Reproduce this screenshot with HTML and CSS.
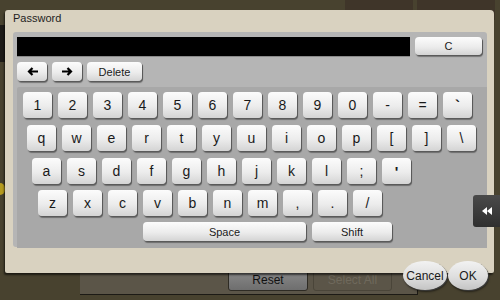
FILE: index.html
```html
<!DOCTYPE html>
<html lang="en">
<head>
  <meta charset="UTF-8" />
  <title>Password</title>
  <link rel="stylesheet" href="styles.css">
</head>
<body>
<div class="screen">
  <!-- background screen, mostly hidden by the dialog -->
  <div class="topbar">
    <div class="tab">Language</div>
    <div class="tab tab-job">Job List</div>
  </div>
  <div class="middle">
    <div class="left-edge">
      <div class="edge-black"></div>
      <div class="edge-bump"></div>
    </div>
  </div>
  <div class="bottom">
    <div class="bottom-panel">
      <button class="bg-btn">Reset</button>
      <button class="bg-btn disabled">Select All</button>
    </div>
  </div>

  <div class="side-tab">
    <svg width="10" height="8" viewBox="0 0 10 8"><path d="M0 4L5 0V8Z M5 4L10 0V8Z" fill="#fff"/></svg>
  </div>

  <!-- password dialog -->
  <div class="dialog">
    <div class="dlg-title">Password</div>
    <div class="panel">
      <div class="input-row">
        <div class="pw-input"></div>
        <div class="key btn-c">C</div>
      </div>
      <div class="edit-row">
        <div class="key btn-arrow">
          <svg width="11" height="9" viewBox="0 0 11 9"><path d="M11 4.5H2 M5.5 1L2 4.5L5.5 8" stroke="#000" stroke-width="2.2" fill="none"/></svg>
        </div>
        <div class="key btn-arrow">
          <svg width="11" height="9" viewBox="0 0 11 9"><path d="M0 4.5H9 M5.5 1L9 4.5L5.5 8" stroke="#000" stroke-width="2.2" fill="none"/></svg>
        </div>
        <div class="key btn-delete">Delete</div>
      </div>
      <div class="keyboard">
        <div class="krow r1">
          <div class="key">1</div><div class="key">2</div><div class="key">3</div><div class="key">4</div><div class="key">5</div><div class="key">6</div><div class="key">7</div><div class="key">8</div><div class="key">9</div><div class="key">0</div><div class="key">-</div><div class="key">=</div><div class="key bold">`</div>
        </div>
        <div class="krow r2">
          <div class="key">q</div><div class="key">w</div><div class="key">e</div><div class="key">r</div><div class="key">t</div><div class="key">y</div><div class="key">u</div><div class="key">i</div><div class="key">o</div><div class="key">p</div><div class="key">[</div><div class="key">]</div><div class="key">\</div>
        </div>
        <div class="krow r3">
          <div class="key">a</div><div class="key">s</div><div class="key">d</div><div class="key">f</div><div class="key">g</div><div class="key">h</div><div class="key">j</div><div class="key">k</div><div class="key">l</div><div class="key">;</div><div class="key bold">'</div>
        </div>
        <div class="krow r4">
          <div class="key">z</div><div class="key">x</div><div class="key">c</div><div class="key">v</div><div class="key">b</div><div class="key">n</div><div class="key">m</div><div class="key">,</div><div class="key">.</div><div class="key">/</div>
        </div>
        <div class="krow r5">
          <div class="key btn-space">Space</div>
          <div class="key btn-shift">Shift</div>
        </div>
      </div>
    </div>
    <div class="dlg-actions">
      <div class="oval">Cancel</div>
      <div class="oval ok">OK</div>
    </div>
  </div>
</div>
</body>
</html>
```

FILE: styles.css
```css
body {
  margin: 0;
  font-family: "Liberation Sans", Arial, sans-serif;
  background: #48422f;
}
.screen {
  position: relative;
  width: 500px;
  height: 300px;
  overflow: hidden;
  background: #48422f;
  display: flex;
  flex-direction: column;
}

/* background screen */
.topbar {
  height: 20px;
  display: flex;
  justify-content: flex-end;
  gap: 4px;
  padding-right: 5px;
}
.tab {
  width: 68px;
  height: 20px;
  background: #3f3529;
  color: #a69f93;
  font-size: 11px;
  text-align: center;
  line-height: 30px;
}
.tab-job {
  width: 78px;
}
.middle {
  flex: 1;
  display: flex;
}
.left-edge {
  width: 5px;
  display: flex;
  flex-direction: column;
}
.edge-black {
  height: 37px;
  margin-top: 5px;
  background: #1d1b17;
}
.edge-bump {
  width: 5px;
  height: 12px;
  margin-top: 121px;
  background: #b59b1f;
  border-radius: 0 6px 6px 0;
}
.bottom {
  height: 50px;
}
.bottom-panel {
  margin-left: 80px;
  width: 338px;
  height: 45px;
  background: #5b5548;
  border-bottom: 1px solid #1c1a15;
  border-right: 1px solid #1c1a15;
  display: flex;
  align-items: flex-end;
  gap: 5px;
  padding-left: 148px;
  box-sizing: border-box;
  padding-bottom: 3px;
}
.bg-btn {
  width: 80px;
  height: 22px;
  border: 1px solid #2e2b24;
  border-radius: 3px;
  background: linear-gradient(#8a8a8a, #6e6e6e);
  font-family: "Liberation Sans", Arial, sans-serif;
  font-size: 12px;
  color: #111;
  padding: 0;
}
.bg-btn.disabled {
  width: 79px;
  background: #5b5548;
  border-color: #4a4539;
  color: #6f695c;
}

.side-tab {
  position: absolute;
  right: 0;
  top: 195px;
  width: 27px;
  height: 32px;
  background: linear-gradient(#4a4a4a, #2f2f2f);
  border-radius: 3px 0 0 3px;
  display: flex;
  align-items: center;
  justify-content: center;
  z-index: 2;
}

/* dialog */
.dialog {
  position: absolute;
  left: 5px;
  top: 10px;
  width: 489px;
  height: 263px;
  background: #d9d2c0;
  border-radius: 3px 4px 2px 2px;
  box-shadow: -1px 2px 2px rgba(0,0,0,0.6);
}
.dlg-title {
  height: 22px;
  padding-left: 8px;
  padding-top: 2px;
  box-sizing: border-box;
  font-size: 11px;
  line-height: 13px;
  color: #1e1e1e;
}
.panel {
  margin-left: 8px;
  width: 474px;
  height: 215px;
  background: #b5b5b5;
  border-radius: 3px;
  padding: 5px 0 0 4px;
  box-sizing: border-box;
  display: flex;
  flex-direction: column;
}
.input-row {
  display: flex;
  gap: 5px;
  height: 20px;
}
.pw-input {
  width: 393px;
  height: 20px;
  background: #000;
  border-bottom: 1px solid #8a8a8a;
  box-sizing: border-box;
}
.edit-row {
  display: flex;
  gap: 5px;
  margin-top: 5px;
}
.keyboard {
  flex: 1;
  margin-top: 6px;
  background: #a8a8a8;
  border-radius: 2px 0 0 0;
  padding-top: 5px;
  display: flex;
  flex-direction: column;
}
.krow {
  display: flex;
  gap: 6px;
  margin-bottom: 7px;
}
.r1 { padding-left: 6px; }
.r2 { padding-left: 10px; }
.r3 { padding-left: 15px; margin-bottom: 6px; }
.r4 { padding-left: 21px; margin-bottom: 6px; }
.r5 { padding-left: 126px; }

.key {
  width: 29px;
  height: 26px;
  border-radius: 4px;
  background: linear-gradient(#fcfcfc, #ececec 55%, #d4d4d4);
  box-shadow: 1px 1px 0 #5a5a5a, 1px 2px 1px rgba(0,0,0,0.35);
  display: flex;
  align-items: center;
  justify-content: center;
  font-size: 14px;
  color: #1a1a1a;
}
.key.bold {
  font-weight: bold;
  font-size: 15px;
}
.btn-c {
  width: 67px;
  height: 18px;
  font-size: 11px;
}
.btn-arrow {
  width: 30px;
  height: 19px;
}
.btn-delete {
  width: 55px;
  height: 19px;
  font-size: 11px;
}
.btn-space {
  width: 163px;
  height: 19px;
  font-size: 11px;
}
.btn-shift {
  width: 80px;
  height: 19px;
  font-size: 11px;
}

.dlg-actions {
  position: absolute;
  right: 6px;
  bottom: -17px;
  display: flex;
  gap: 1px;
}
.oval {
  width: 44px;
  height: 29px;
  border-radius: 50%;
  background: linear-gradient(#f2f2f2, #dedede 55%, #c4c4c4);
  box-shadow: 1px 1px 0 #3a3a3a, 1px 2px 2px rgba(0,0,0,0.5);
  display: flex;
  align-items: center;
  justify-content: center;
  font-size: 12px;
  color: #1a1a1a;
}
.oval.ok {
  width: 40px;
}
```
